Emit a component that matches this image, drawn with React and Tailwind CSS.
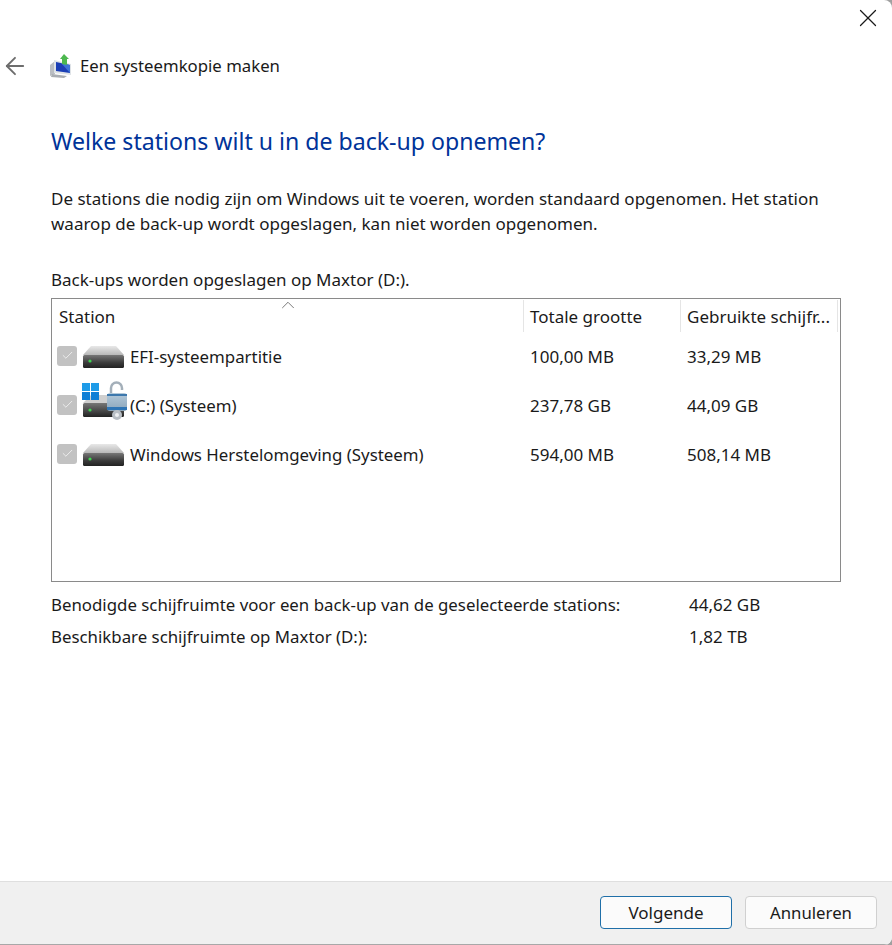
import React from 'react';
import { ArrowLeft, Check, ChevronUp, X } from 'lucide-react';

const font = { fontFamily: '"Noto Sans", sans-serif' };

// small drive icon, the lock + windows flag are only on the system drive
function Drive() {
  return (
    <svg width="44" height="24" viewBox="0 0 44 24" className="block">
      <defs>
        <linearGradient id="driveTop" x1="0" y1="0" x2="0" y2="1">
          <stop offset="0" stopColor="#e8e8e8" />
          <stop offset="1" stopColor="#b8b8b8" />
        </linearGradient>
        <linearGradient id="driveFront" x1="0" y1="0" x2="0" y2="1">
          <stop offset="0" stopColor="#777777" />
          <stop offset="0.6" stopColor="#3a3a3a" />
          <stop offset="1" stopColor="#222222" />
        </linearGradient>
      </defs>
      <path d="M1 10 L9 1 H34 L42 10 Z" fill="url(#driveTop)" />
      <rect x="1" y="10" width="41" height="13" rx="1.5" fill="url(#driveFront)" />
      <circle cx="8" cy="16" r="1.6" fill="#3fd44f" />
    </svg>
  );
}

function SystemDrive() {
  return (
    <svg width="46" height="40" viewBox="0 0 46 40" className="block -mt-[10px] -mr-[2px]">
      <defs>
        <linearGradient id="sysFront" x1="0" y1="0" x2="0" y2="1">
          <stop offset="0" stopColor="#777777" />
          <stop offset="1" stopColor="#222222" />
        </linearGradient>
        <linearGradient id="lockBody" x1="0" y1="0" x2="0" y2="1">
          <stop offset="0" stopColor="#b4cadb" />
          <stop offset="1" stopColor="#8ba5ba" />
        </linearGradient>
      </defs>
      <path d="M1 22 L9 14 H34 L42 22 Z" fill="#cfcfcf" />
      <rect x="1" y="22" width="41" height="14" rx="1.5" fill="url(#sysFront)" />
      <circle cx="8" cy="29" r="1.6" fill="#3fd44f" />
      <rect x="0" y="2" width="8" height="8" fill="#1e9be8" />
      <rect x="9" y="2" width="8" height="8" fill="#1e9be8" />
      <rect x="0" y="11" width="8" height="8" fill="#0f7fd6" />
      <rect x="9" y="11" width="8" height="8" fill="#0f7fd6" />
      <path d="M29 13 V7 a5.5 5.5 0 0 1 11 0 V9" fill="none" stroke="#a3afb9" strokeWidth="2.5" />
      <rect x="25" y="12" width="20" height="18" rx="3" fill="url(#lockBody)" />
      <rect x="25" y="13" width="20" height="2" fill="#3d78ad" />
      <rect x="25" y="26" width="20" height="3" fill="#2f75b5" />
      <circle cx="35" cy="34" r="5" fill="#b9bfc5" />
      <circle cx="35" cy="34" r="2" fill="#eef0f2" />
    </svg>
  );
}

function BackupIcon() {
  return (
    <svg width="24" height="26" viewBox="0 0 24 26" className="block">
      <path d="M1 12 L6 8 V21 L1 23 Z" fill="#b9bdc2" />
      <path d="M5 7 L22 11 V22 L5 20 Z" fill="#dfe3e7" />
      <path d="M7 9 L21 12 V20 L7 18 Z" fill="#1b3fb5" />
      <path d="M12 10 L21 12 V20 Z" fill="#3d74d8" />
      <path d="M3 21 L18 23 L15 25 L2 24 Z" fill="#a9adb2" />
      <path d="M15 1 L20 6 H18 V12 L13 11 V6 H11 Z" fill="#4db84f" />
    </svg>
  );
}

function Row({ name, total, used, system }) {
  return (
    <div className="flex items-center h-[49px]">
      <div className="w-[471px] flex items-center">
        <div className="ml-[5px] -mt-[2px] w-[20px] h-[20px] rounded-[3px] bg-[#c2c2c2] flex items-center justify-center shrink-0">
          <Check size={13} strokeWidth={1.25} className="text-white" />
        </div>
        <div className="ml-[5px] w-[44px] shrink-0 flex justify-center">
          {system ? <SystemDrive /> : <Drive />}
        </div>
        <span className="ml-[4px] text-[16.85px]">{name}</span>
      </div>
      <div className="w-[157px] pl-[7px]">{total}</div>
      <div className="pl-[7px]">{used}</div>
    </div>
  );
}

export default function App() {
  return (
    <div className="w-[892px] h-[945px] bg-[#a0a0a0]">
      <div
        className="w-full h-full bg-white rounded-br-[8px] rounded-tr-[8px] overflow-hidden flex flex-col text-[17px] text-[#1a1a1a] leading-[24px]"
        style={font}
      >
        <div className="flex justify-end pt-[3px] pr-[9px] h-[54px]">
          <X size={30} strokeWidth={1} className="text-[#1a1a1a]" />
        </div>

        <div className="flex items-center h-[24px]">
          <ArrowLeft size={28} strokeWidth={1.6} className="ml-[1px] text-[#6d6d6d]" />
          <div className="ml-[20px]"><BackupIcon /></div>
          <span className="ml-[7px] text-[16.75px]">Een systeemkopie maken</span>
        </div>

        <div className="flex-1 px-[51px]">
          <h1 className="mt-[47px] text-[23.1px] leading-[32px] text-[#003399]">
            Welke stations wilt u in de back-up opnemen?
          </h1>
          <p className="mt-[29px] leading-[25px] w-[790px]">
            De stations die nodig zijn om Windows uit te voeren, worden standaard opgenomen. Het station waarop de back-up wordt opgeslagen, kan niet worden opgenomen.
          </p>
          <p className="mt-[32px]">Back-ups worden opgeslagen op Maxtor (D:).</p>

          <div className="mt-[6px] w-[790px] h-[284px] border border-[#8a8a8a]">
            <div className="relative flex h-[33px] pt-[1px]">
              <ChevronUp size={22} strokeWidth={1} className="absolute left-[225px] -top-[5px] text-[#6d6d6d]" />
              <div className="w-[471px] pl-[7px] pt-[2px] flex items-center">Station</div>
              <div className="w-[157px] pl-[6px] pt-[2px] flex items-center border-l border-[#e5e5e5]">Totale grootte</div>
              <div className="w-[158px] pl-[6px] pt-[2px] flex items-center border-x border-[#e5e5e5]">Gebruikte schijfr...</div>
            </div>
            <Row name="EFI-systeempartitie" total="100,00 MB" used="33,29 MB" />
            <Row name="(C:) (Systeem)" total="237,78 GB" used="44,09 GB" system />
            <Row name="Windows Herstelomgeving (Systeem)" total="594,00 MB" used="508,14 MB" />
          </div>

          <div className="mt-[11px] flex">
            <div className="w-[638px] text-[16.83px]">Benodigde schijfruimte voor een back-up van de geselecteerde stations:</div>
            <div>44,62 GB</div>
          </div>
          <div className="mt-[8px] flex">
            <div className="w-[638px] text-[16.83px]">Beschikbare schijfruimte op Maxtor (D:):</div>
            <div>1,82 TB</div>
          </div>
        </div>

        <div className="h-[64px] bg-[#f0f0f0] border-t border-[#dfdfdf] border-b-[#a8a8a8] border-b flex justify-end items-start pt-[14px] pr-[15px] gap-[13px]">
          <button className="w-[132px] h-[33px] rounded-[4px] bg-[#fbfbfb] border border-[#1f6fa8] text-[#1a1a1a]">Volgende</button>
          <button className="w-[132px] h-[33px] rounded-[4px] bg-[#fbfbfb] border border-[#d0d0d0] text-[16.75px] text-[#1a1a1a]">Annuleren</button>
        </div>
      </div>
    </div>
  );
}
